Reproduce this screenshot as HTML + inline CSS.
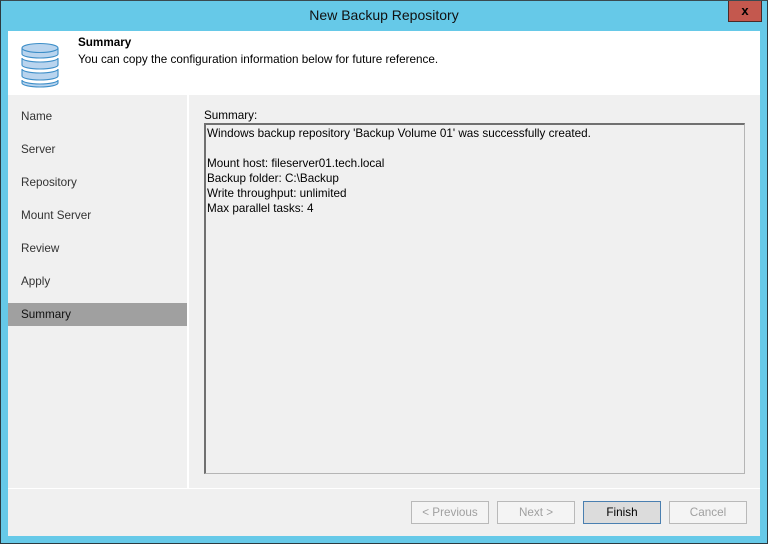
<!DOCTYPE html>
<html><head><style>
*{margin:0;padding:0;box-sizing:border-box}
body{width:768px;height:544px;background:#66c9e8;position:relative;overflow:hidden;font-family:"Liberation Sans",sans-serif;font-size:11.7px;color:#000}
.frame{position:absolute;left:0;top:0;width:768px;height:544px;border:1px solid #2b3a40;border-top-color:#3a4a50}
.title{position:absolute;left:0;top:7px;width:768px;text-align:center;font-size:14px;color:#111}
.close{position:absolute;left:728px;top:1px;width:34px;height:21px;background:#c4584e;border:1px solid #4a2a28;border-top:none;text-align:center;font-weight:bold;font-size:13px;line-height:19px}
.content{position:absolute;left:8px;top:31px;width:752px;height:505px;background:#f0f0f0}
.hdr{position:absolute;left:0;top:0;width:752px;height:64px;background:#fff}
.hdr b{position:absolute;left:70px;top:5px}
.hdr span{position:absolute;left:70px;top:22px}
.nav{position:absolute;left:0;top:64px;width:181px;height:394px;background:#f0f0f0;border-right:2px solid #fff}
.nav div{position:absolute;left:0;width:179px;height:23px;padding-left:13px;line-height:23px;color:#333}
.nav .sel{background:#a0a0a0;color:#111}
.lbl{position:absolute;left:196px;top:78px}
.box{position:absolute;left:196px;top:92px;width:541px;height:351px;background:#f0f0f0;border:2px solid #707070;border-right:1px solid #b5b5b5;border-bottom:1px solid #b5b5b5;padding:1px 0 0 1px;line-height:15px;white-space:pre}
.sep{position:absolute;left:0;top:457px;width:752px;height:1px;background:#fff}
.btn{position:absolute;top:470px;width:78px;height:23px;border:1px solid #b9b9b9;background:#f4f4f4;color:#a0a0a0;text-align:center;line-height:21px}
.fin{border-color:#4a7fb0;background:#dcdcdc;color:#000}
</style></head><body>
<div class="frame"></div>
<div class="title">New Backup Repository</div>
<div class="close">x</div>
<div class="content">
 <div class="hdr">
  <svg style="position:absolute;left:13px;top:11px" width="38" height="46" viewBox="0 0 38 46">
   <g fill="#b9d4ee" stroke="#3d8ec8" stroke-width="1.1">
    <path d="M1 6v6a18 4 0 0 0 36 0v-6"/>
    <ellipse cx="19" cy="6" rx="18" ry="4.5"/>
    <path d="M1 16v7a18 4 0 0 0 36 0v-7a18 4 0 0 1 -36 0z"/>
    <path d="M1 27v7a18 4 0 0 0 36 0v-7a18 4 0 0 1 -36 0z"/>
    <path d="M1 38v3a18 4 0 0 0 36 0v-3a18 4 0 0 1 -36 0z"/>
   </g>
  </svg>
  <b>Summary</b>
  <span>You can copy the configuration information below for future reference.</span>
 </div>
 <div class="nav">
  <div style="top:10px">Name</div>
  <div style="top:43px">Server</div>
  <div style="top:76px">Repository</div>
  <div style="top:109px">Mount Server</div>
  <div style="top:142px">Review</div>
  <div style="top:175px">Apply</div>
  <div class="sel" style="top:208px">Summary</div>
 </div>
 <div class="lbl">Summary:</div>
 <div class="box">Windows backup repository 'Backup Volume 01' was successfully created.

Mount host: fileserver01.tech.local
Backup folder: C:\Backup
Write throughput: unlimited
Max parallel tasks: 4</div>
 <div class="sep"></div>
 <div class="btn" style="left:403px">&lt; Previous</div>
 <div class="btn" style="left:489px">Next &gt;</div>
 <div class="btn fin" style="left:575px">Finish</div>
 <div class="btn" style="left:661px">Cancel</div>
</div>
</body></html>
